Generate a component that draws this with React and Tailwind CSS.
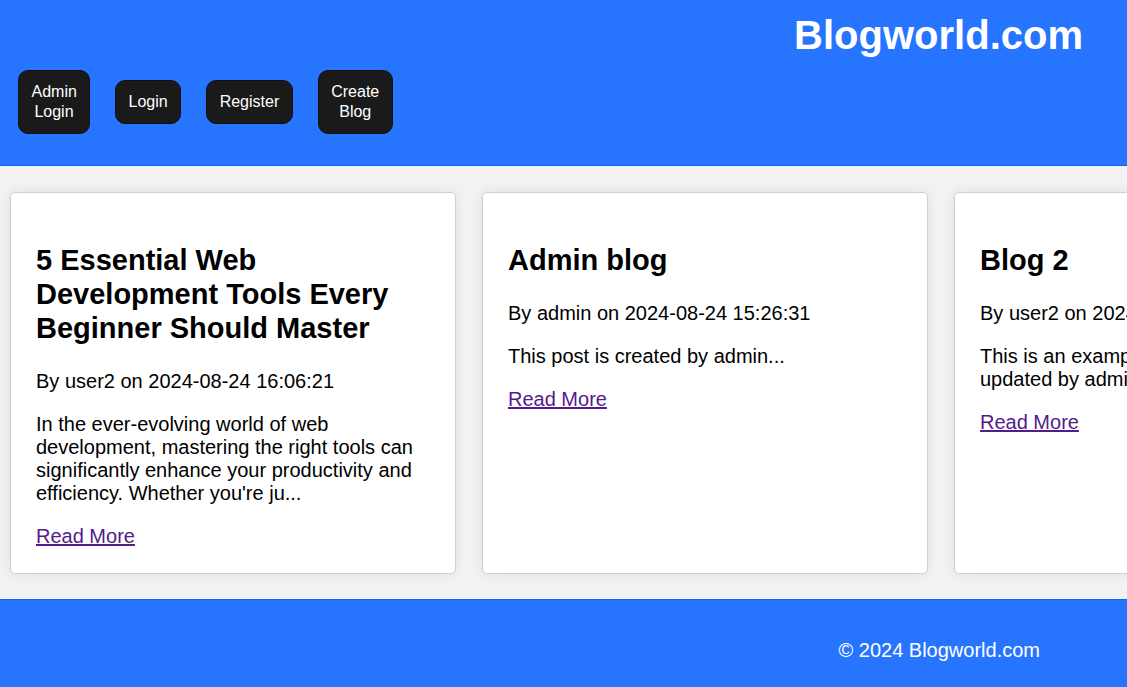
import React from 'react'

const posts = [
  {
    title: '5 Essential Web Development Tools Every Beginner Should Master',
    author: 'user2',
    date: '2024-08-24 16:06:21',
    excerpt:
      "In the ever-evolving world of web development, mastering the right tools can significantly enhance your productivity and efficiency. Whether you're ju...",
  },
  {
    title: 'Admin blog',
    author: 'admin',
    date: '2024-08-24 15:26:31',
    excerpt: 'This post is created by admin...',
  },
  {
    title: 'Blog 2',
    author: 'user2',
    date: '2024-08-24 14:52:10',
    excerpt: 'This is an example blog post that has been updated by admin...',
  },
]

const NavButton = ({ children, className = '' }) => (
  <button
    className={`bg-[#1a1a1a] text-white text-[16px] leading-[20px] border border-[#0f0f0f] rounded-[10px] py-[11px] px-[12.5px] text-center ${className}`}
  >
    {children}
  </button>
)

const App = () => {
  return (
    <div className="min-h-screen bg-[#f2f2f2] font-['Liberation_Sans',Arial,sans-serif] overflow-hidden">
      {/* header */}
      <header className="bg-[#2775ff] border-b border-[#0b63f0] pt-[12px] pb-[31px]">
        <div className="flex justify-end pr-[44px]">
          <h1 className="text-white text-[40px] leading-[46px] font-bold">Blogworld.com</h1>
        </div>
        <nav className="flex items-center gap-[25px] pl-[18px] mt-[12px]">
          <NavButton className="w-[72px]">Admin<br />Login</NavButton>
          <NavButton>Login</NavButton>
          <NavButton>Register</NavButton>
          <NavButton className="w-[75px]">Create<br />Blog</NavButton>
        </nav>
      </header>

      {/* posts */}
      <main className="flex gap-[26px] pl-[10px] pt-[26px] pb-[25px]">
        {posts.map((post) => (
          <div
            key={post.title}
            className="w-[446px] shrink-0 bg-white border border-[#d0d0d0] rounded-[5px] shadow-[0_0_12px_rgba(0,0,0,0.08)] px-[25px] pt-[50px] pb-[23px] text-black"
          >
            <h2 className="text-[29px] leading-[34px] font-bold mb-[25px]">{post.title}</h2>
            <p className="text-[20px] leading-[23px] mb-[20px]">
              By {post.author} on {post.date}
            </p>
            <p className="text-[20px] leading-[23px] mb-[20px]">{post.excerpt}</p>
            <a href="#" className="text-[20px] leading-[23px] text-[#551a8b] underline">
              Read More
            </a>
          </div>
        ))}
      </main>

      {/* footer */}
      <footer className="bg-[#2775ff] border-t border-[#0b63f0] pt-[39px] pb-[40px] flex justify-end pr-[87px]">
        <p className="text-white text-[20px] leading-[23px]">© 2024 Blogworld.com</p>
      </footer>
    </div>
  )
}

export default App
